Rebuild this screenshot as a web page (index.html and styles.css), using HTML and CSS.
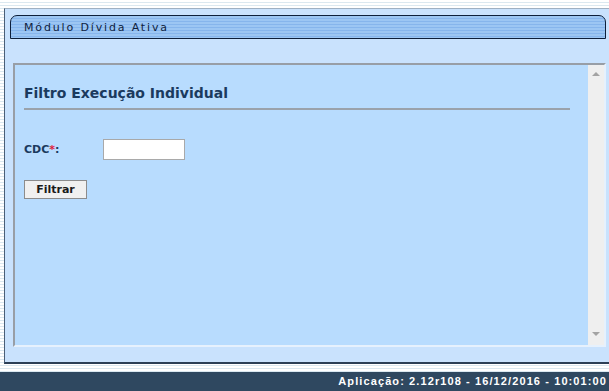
FILE: index.html
```html
<!DOCTYPE html>
<html lang="pt">
<head>
<meta charset="utf-8">
<title>Módulo Dívida Ativa</title>
<link rel="stylesheet" href="styles.css">
</head>
<body>
<div class="frame">
  <div class="tab"><span class="tab-title">Módulo Dívida Ativa</span></div>
  <div class="panel">
    <div class="content">
      <h1 class="title">Filtro Execução Individual</h1>
      <div class="field">
        <label class="label">CDC<span class="req">*</span>:</label>
        <input class="input" type="text">
      </div>
      <button class="btn">Filtrar</button>
    </div>
    <div class="scrollbar">
      <span class="arrow up"></span>
      <span class="arrow down"></span>
    </div>
  </div>
</div>
<div class="footer">Aplicação: 2.12r108 - 16/12/2016 - 10:01:00</div>
</body>
</html>
```
FILE: styles.css
```css
html, body {
  margin: 0;
  padding: 0;
}
body {
  width: 609px;
  height: 391px;
  overflow: hidden;
  background: #ffffff repeating-linear-gradient(to bottom, #ffffff 0, #ffffff 2px, #dbe8f0 2px, #dbe8f0 3px);
  font-family: "DejaVu Sans", Verdana, sans-serif;
  padding-top: 8px;
  box-sizing: border-box;
}
.frame {
  margin-left: 4px;
  height: 356px;
  box-sizing: border-box;
  background: #c9e2fd;
  border-top: 1px solid #9fb0c2;
  border-left: 1px solid #4a5e76;
  border-bottom: 2px solid #2c3f56;
  padding: 6px 3px 0 5px;
}
.tab {
  height: 24px;
  box-sizing: border-box;
  border: 1px solid #0d1f3a;
  border-radius: 7px 7px 0 0;
  background: repeating-linear-gradient(to bottom, #9cc6f3 0, #9cc6f3 2px, #86b5ec 2px, #86b5ec 3px);
  display: flex;
  align-items: center;
  padding-left: 13px;
}
.tab-title {
  font-family: "DejaVu Sans", Verdana, sans-serif;
  font-size: 11px;
  letter-spacing: 1.85px;
  color: #0f2240;
}
.panel {
  margin-top: 24px;
  margin-left: 3px;
  height: 284px;
  box-sizing: border-box;
  display: flex;
  border-top: 2px solid #989ea6;
  border-left: 2px solid #989ea6;
  border-bottom: 2px solid #e6f1fd;
  border-right: 2px solid #e6f1fd;
  background: #b8dcfe;
}
.content {
  flex: 1;
  padding: 20px 18px 0 9px;
}
.title {
  margin: 0;
  font-size: 14px;
  font-weight: bold;
  color: #1b3a5e;
  padding-bottom: 4px;
  border-bottom: 2px solid #9aa2ab;
  height: 19px;
}
.field {
  display: flex;
  align-items: center;
  margin-top: 29px;
}
.label {
  width: 79px;
  font-size: 11px;
  font-weight: bold;
  color: #1b3a5e;
}
.req {
  color: #e0203a;
}
.input {
  width: 82px;
  height: 21px;
  box-sizing: border-box;
  border: 1px solid #a9a9a9;
  background: #ffffff;
  margin: 0;
  padding: 0;
}
.btn {
  margin-top: 20px;
  width: 63px;
  height: 19px;
  box-sizing: border-box;
  border: 1px solid #8c8c8c;
  background: #f0f0f0;
  font-family: "DejaVu Sans", Verdana, sans-serif;
  font-size: 11px;
  font-weight: bold;
  color: #1a1a1a;
  padding: 0;
}
.scrollbar {
  width: 16px;
  background: #efefef;
  display: flex;
  flex-direction: column;
  justify-content: space-between;
  align-items: center;
  padding: 7px 0 9px;
  box-sizing: border-box;
}
.arrow {
  width: 0;
  height: 0;
  border-left: 4px solid transparent;
  border-right: 4px solid transparent;
}
.arrow.up {
  border-bottom: 4px solid #a3a3a3;
}
.arrow.down {
  border-top: 4px solid #a3a3a3;
}
.footer {
  margin-top: 8px;
  height: 19px;
  background: #2f4860;
  color: #ffffff;
  font-family: "Liberation Sans", Arial, sans-serif;
  font-size: 11px;
  font-weight: bold;
  letter-spacing: 1.1px;
  text-align: right;
  line-height: 19px;
  padding-right: 2px;
}
```
